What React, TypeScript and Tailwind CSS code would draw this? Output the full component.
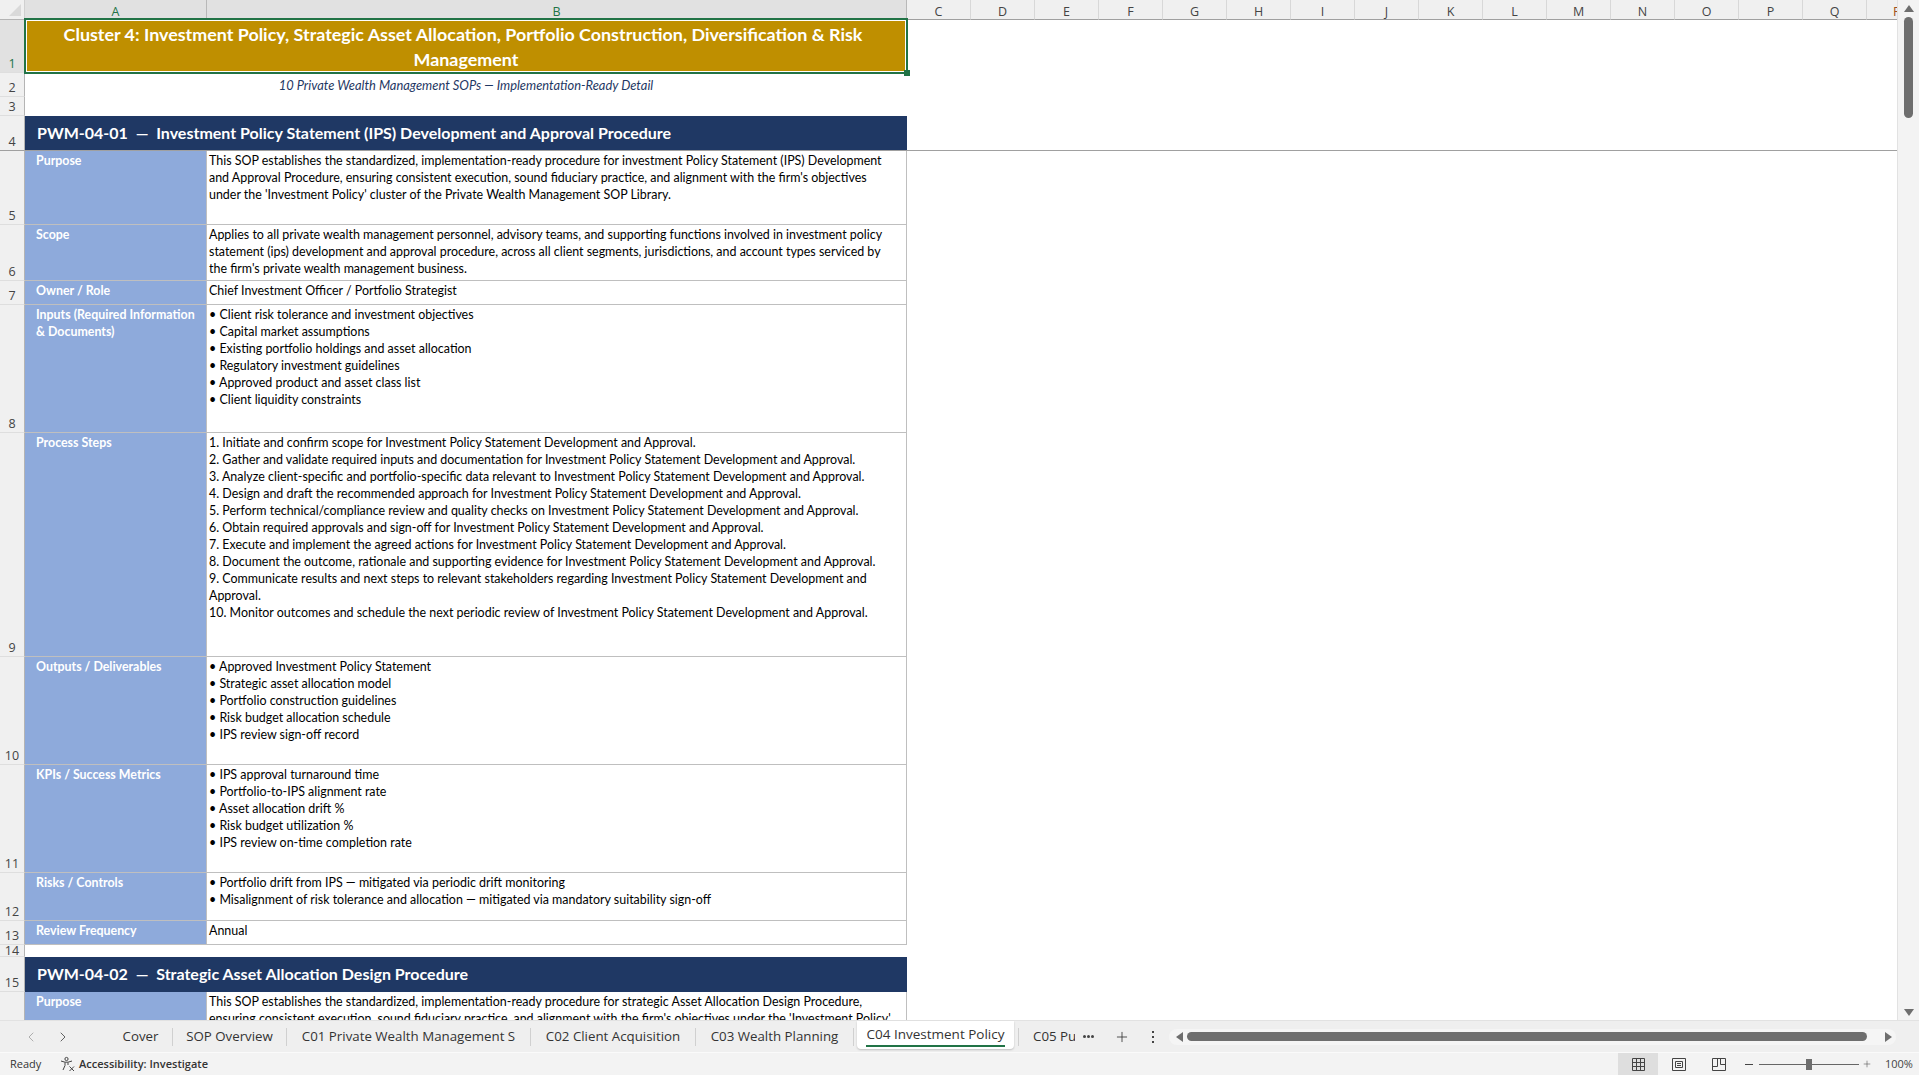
import React from "react";
import { ChevronLeft, ChevronRight, Plus } from "lucide-react";

const ips = "Investment Policy Statement Development and Approval.";
const rows: { n: number; h: string; label?: string; lines: string[] }[] = [
  { n: 5, h: "h-[74px]", label: "Purpose", lines: [
    "This SOP establishes the standardized, implementation-ready procedure for investment Policy Statement (IPS) Development",
    "and Approval Procedure, ensuring consistent execution, sound fiduciary practice, and alignment with the firm's objectives",
    "under the 'Investment Policy' cluster of the Private Wealth Management SOP Library.",
  ] },
  { n: 6, h: "h-[56px]", label: "Scope", lines: [
    "Applies to all private wealth management personnel, advisory teams, and supporting functions involved in investment policy",
    "statement (ips) development and approval procedure, across all client segments, jurisdictions, and account types serviced by",
    "the firm's private wealth management business.",
  ] },
  { n: 7, h: "h-[24px]", label: "Owner / Role", lines: ["Chief Investment Officer / Portfolio Strategist"] },
  { n: 8, h: "h-[128px]", label: "Inputs (Required Information\n& Documents)", lines: [
    "• Client risk tolerance and investment objectives",
    "• Capital market assumptions",
    "• Existing portfolio holdings and asset allocation",
    "• Regulatory investment guidelines",
    "• Approved product and asset class list",
    "• Client liquidity constraints",
  ] },
  { n: 9, h: "h-[224px]", label: "Process Steps", lines: [
    `1. Initiate and confirm scope for ${ips}`,
    `2. Gather and validate required inputs and documentation for ${ips}`,
    `3. Analyze client-specific and portfolio-specific data relevant to ${ips}`,
    `4. Design and draft the recommended approach for ${ips}`,
    `5. Perform technical/compliance review and quality checks on ${ips}`,
    `6. Obtain required approvals and sign-off for ${ips}`,
    `7. Execute and implement the agreed actions for ${ips}`,
    `8. Document the outcome, rationale and supporting evidence for ${ips}`,
    "9. Communicate results and next steps to relevant stakeholders regarding Investment Policy Statement Development and",
    "Approval.",
    `10. Monitor outcomes and schedule the next periodic review of ${ips}`,
  ] },
  { n: 10, h: "h-[108px]", label: "Outputs / Deliverables", lines: [
    "• Approved Investment Policy Statement",
    "• Strategic asset allocation model",
    "• Portfolio construction guidelines",
    "• Risk budget allocation schedule",
    "• IPS review sign-off record",
  ] },
  { n: 11, h: "h-[108px]", label: "KPIs / Success Metrics", lines: [
    "• IPS approval turnaround time",
    "• Portfolio-to-IPS alignment rate",
    "• Asset allocation drift %",
    "• Risk budget utilization %",
    "• IPS review on-time completion rate",
  ] },
  { n: 12, h: "h-[48px]", label: "Risks / Controls", lines: [
    "• Portfolio drift from IPS — mitigated via periodic drift monitoring",
    "• Misalignment of risk tolerance and allocation — mitigated via mandatory suitability sign-off",
  ] },
  { n: 13, h: "h-[24px]", label: "Review Frequency", lines: ["Annual"] },
];

const letters = ["C","D","E","F","G","H","I","J","K","L","M","N","O","P","Q"];

function RowHead({ n, active, strong }: { n: number; active?: boolean; strong?: boolean }) {
  return (
    <div className={`w-[25px] shrink-0 flex items-end justify-center border-r border-[#b4b4b4] border-b text-[12.5px] leading-[16px] ${strong ? "border-b-[#a0a0a0]" : "border-b-[#dedede]"} ${active ? "bg-[#e1e1e1] text-[#217346]" : "bg-[#f0f0f0] text-[#444444]"}`}>
      {n}
    </div>
  );
}

function DataRow({ n, h, label, lines }: { n: number; h: string; label?: string; lines: string[] }) {
  return (
    <div className={`flex shrink-0 ${h}`}>
      <RowHead n={n} />
      <div className="w-[182px] shrink-0 bg-[#8eaadb] border-r border-b border-[#bfbfbf] pl-[11px] pt-px font-bold text-white text-[12.4px] leading-[17px] font-['Lato',sans-serif] whitespace-pre">
        {label}
      </div>
      <div className="w-[700px] shrink-0 bg-white border-r border-b border-[#bfbfbf] pl-[2px] pt-px text-black text-[12.45px] leading-[17px] font-['Lato',sans-serif] whitespace-nowrap overflow-hidden">
        {lines.map((l, i) => <div key={i}>{l}</div>)}
      </div>
      <div className="flex-1 bg-white" />
    </div>
  );
}

function SectionRow({ n, title }: { n: number; title: string }) {
  return (
    <div className="flex shrink-0 h-[35px]">
      <RowHead n={n} strong={n === 4} />
      <div className={`w-[882px] shrink-0 bg-[#1f3864] border-b ${n === 4 ? "border-[#a0a0a0]" : "border-[#1f3864]"} flex items-center pl-[12px] font-bold text-white text-[16px] font-['Lato',sans-serif] whitespace-pre`}>
        {title}
      </div>
      <div className={`flex-1 bg-white ${n === 4 ? "border-b border-[#a0a0a0]" : ""}`} />
    </div>
  );
}

function Tab({ label, w, sep = true }: { label: string; w: string; sep?: boolean }) {
  return (
    <div className={`${w} shrink-0 h-[18px] flex items-center justify-center text-[13.3px] text-[#333333] whitespace-nowrap ${sep ? "border-r border-[#d0d0d0]" : ""}`}>
      {label}
    </div>
  );
}

export default function App() {
  return (
    <div className="w-[1919px] h-[1075px] flex flex-col overflow-hidden bg-[#f3f3f3] font-['Open_Sans',sans-serif]">
      <div className="flex h-[1021px] shrink-0 border-b border-[#e2e2e2]">
        <div className="w-[1897px] shrink-0 flex flex-col overflow-hidden relative bg-white">
          {/* Column headers */}
          <div className="flex h-[20px] shrink-0 text-[12.5px] leading-[23px] text-[#444444] overflow-hidden">
            <div className="w-[25px] shrink-0 bg-[#f0f0f0] border-r border-b border-[#b4b4b4] border-r-[#d0d0d0] flex items-end justify-end pr-[3px] pb-[3px]">
              <svg width="12" height="12" viewBox="0 0 12 12"><path d="M12 0v12H0z" fill="#d9d9d9" /></svg>
            </div>
            <div className="w-[182px] shrink-0 bg-[#e1e1e1] border-r border-b border-r-[#b8b8b8] border-b-[#217346] text-center text-[#217346]">A</div>
            <div className="w-[700px] shrink-0 bg-[#e1e1e1] border-b border-b-[#217346] border-r border-r-[#b8b8b8] text-center text-[#217346]">B</div>
            {letters.map((l) => (
              <div key={l} className="w-[64px] shrink-0 bg-[#f0f0f0] border-r border-b border-r-[#d8d8d8] border-b-[#a0a0a0] text-center">{l}</div>
            ))}
            <div className="flex-1 bg-[#f0f0f0] border-b border-[#a0a0a0] pl-[26px] text-[#a05020]">R</div>
          </div>

          {/* Row 1 */}
          <div className="flex h-[53px] shrink-0">
            <RowHead n={1} active />
            <div className="w-[882px] shrink-0 relative bg-[#bf8f00] text-white font-bold text-[17.9px] leading-[25px] text-center font-['Lato',sans-serif] pt-[2px]">
              <div className="pr-[6px]">Cluster 4: Investment Policy, Strategic Asset Allocation, Portfolio Construction, Diversification &amp; Risk</div>
              <div>Management</div>
              <div className="absolute left-[-1px] right-[-1px] top-[-2px] bottom-[-1px] border-[2px] border-[#217346] outline outline-1 outline-white -outline-offset-3" />
              <div className="absolute right-[-3px] bottom-[-3px] w-[6px] h-[6px] bg-[#217346]" />
            </div>
            <div className="flex-1 bg-white" />
          </div>

          {/* Row 2 */}
          <div className="flex h-[24px] shrink-0">
            <RowHead n={2} />
            <div className="w-[882px] shrink-0 text-center italic text-[#1f3864] text-[12.9px] leading-[24px] font-['Lato',sans-serif]">
              10 Private Wealth Management SOPs — Implementation-Ready Detail
            </div>
          </div>

          {/* Row 3 */}
          <div className="flex h-[19px] shrink-0">
            <RowHead n={3} />
          </div>

          <SectionRow n={4} title="PWM-04-01  —  Investment Policy Statement (IPS) Development and Approval Procedure" />
          {rows.map((r) => <DataRow key={r.n} {...r} />)}

          <div className="flex h-[12px] shrink-0">
            <div className="w-[25px] shrink-0 bg-[#f0f0f0] border-r border-[#b4b4b4] text-[12.5px] leading-[12px] text-center text-[#444444] border-b border-b-[#dedede]">14</div>
          </div>

          <SectionRow n={15} title="PWM-04-02  —  Strategic Asset Allocation Design Procedure" />
          <DataRow n={16} h="h-[56px]" label="Purpose" lines={[
            "This SOP establishes the standardized, implementation-ready procedure for strategic Asset Allocation Design Procedure,",
            "ensuring consistent execution, sound fiduciary practice, and alignment with the firm's objectives under the 'Investment Policy'",
            "cluster of the Private Wealth Management SOP Library.",
          ]} />
        </div>

        {/* Vertical scrollbar */}
        <div className="flex-1 bg-[#f3f3f3] border-l border-[#e2e2e2] flex flex-col items-center">
          <svg className="mt-[5px] shrink-0" width="10" height="7" viewBox="0 0 10 7"><path d="M5 0l5 7H0z" fill="#6e6e6e" /></svg>
          <div className="mt-[5px] w-[9px] h-[101px] rounded-full bg-[#6e6e6e] shrink-0" />
          <div className="flex-1" />
          <svg className="mb-[4px] shrink-0" width="10" height="7" viewBox="0 0 10 7"><path d="M5 7L0 0h10z" fill="#6e6e6e" /></svg>
        </div>
      </div>

      {/* Sheet tabs */}
      <div className="flex h-[32px] shrink-0 items-center bg-[#efefef] border-b border-[#fafafa]">
        <div className="w-[109px] shrink-0 flex items-center pl-[23px] gap-[16px]">
          <ChevronLeft size={16} strokeWidth={1.25} className="text-[#a0a0a0]" />
          <ChevronRight size={16} strokeWidth={1.25} className="text-[#444444]" />
        </div>
        <Tab label="Cover" w="w-[64px]" />
        <Tab label="SOP Overview" w="w-[114px]" />
        <Tab label="C01 Private Wealth Management S" w="w-[244px]" />
        <Tab label="C02 Client Acquisition" w="w-[165px]" />
        <Tab label="C03 Wealth Planning" w="w-[158px]" />
        <div className="ml-[3px] w-[157px] h-[28px] -mt-[4px] shrink-0 bg-white rounded-b-[4px] shadow-[0_1px_2px_rgba(0,0,0,0.2)] flex flex-col items-center justify-start pt-[4px]">
          <div className="text-[13.5px] leading-[18px] text-[#333333] border-b-[2px] border-[#217346] pb-[2px] whitespace-nowrap">C04 Investment Policy</div>
        </div>
        <div className="ml-[4px] h-[18px] border-l border-[#d0d0d0]" />
        <div className="ml-[14px] w-[42px] overflow-hidden whitespace-nowrap text-[13.3px] text-[#333333]">C05 Public Markets</div>
        <div className="ml-[6px] w-[14px] flex justify-center gap-[1px]">
          <span className="w-[3px] h-[3px] rounded-full bg-[#444444]" />
          <span className="w-[3px] h-[3px] rounded-full bg-[#444444]" />
          <span className="w-[3px] h-[3px] rounded-full bg-[#444444]" />
        </div>
        <Plus size={16} strokeWidth={1.25} className="ml-[19px] text-[#333333]" />
        <div className="ml-[22px] flex flex-col gap-[3px]">
          <span className="w-[2px] h-[2px] bg-[#444444]" />
          <span className="w-[2px] h-[2px] bg-[#444444]" />
          <span className="w-[2px] h-[2px] bg-[#444444]" />
        </div>
        <div className="ml-[15px] w-[727px] h-[16px] rounded-full bg-[#f5f5f5] flex items-center pl-[7px] pr-[4px]">
          <svg width="7" height="10" viewBox="0 0 7 10"><path d="M0 5l7-5v10z" fill="#6e6e6e" /></svg>
          <div className="ml-[4px] w-[680px] h-[9px] rounded-full bg-[#6e6e6e]" />
          <div className="flex-1" />
          <svg width="7" height="10" viewBox="0 0 7 10"><path d="M7 5L0 0v10z" fill="#6e6e6e" /></svg>
        </div>
      </div>

      {/* Status bar */}
      <div className="flex h-[22px] flex-1 items-center bg-[#f3f3f3] text-[#333333]">
        <div className="pl-[10px] w-[60px] text-[11px]">Ready</div>
        <svg width="16" height="16" viewBox="0 0 16 16" fill="none" stroke="#444444" strokeWidth="1">
          <circle cx="6.5" cy="3" r="1.6" />
          <path d="M1 5l4 1.2h3L12 5M5 6.5v3L3 14M8 6.5V9" />
          <path d="M9.5 10.5l4.5 4.5M14 10.5L9.5 15" />
        </svg>
        <div className="ml-[3px] text-[11px] font-semibold">Accessibility: Investigate</div>
        <div className="flex-1" />
        <div className="w-[40px] h-full bg-[#dedede] flex items-center justify-center">
          <svg width="13" height="13" viewBox="0 0 13 13" fill="none" stroke="#444444"><path d="M.5.5h12v12H.5zM4.5.5v12M8.5.5v12M.5 4.5h12M.5 8.5h12" /></svg>
        </div>
        <div className="w-[41px] flex items-center justify-center">
          <svg width="14" height="13" viewBox="0 0 14 13" fill="none" stroke="#444444"><path d="M.5.5h13v12H.5zM3.5 3.5h7v6h-7zM5 5.5h4M5 7.5h4" /></svg>
        </div>
        <div className="w-[39px] flex items-center justify-center">
          <svg width="14" height="13" viewBox="0 0 14 13" fill="none" stroke="#444444"><path d="M.5.5h13v12H.5zM.5 8.5h5V.5M8.5.5v6h5" /></svg>
        </div>
        <div className="ml-[7px] w-[8px] h-px bg-[#444444]" />
        <div className="ml-[6px] w-[100px] h-px bg-[#666666] flex items-center justify-center">
          <div className="w-[6px] h-[11px] bg-[#6e6e6e]" />
        </div>
        <Plus size={10} strokeWidth={1.25} className="ml-[3px] text-[#444444]" />
        <div className="ml-[13px] w-[34px] text-[11px] text-[#444444]">100%</div>
      </div>
    </div>
  );
}
